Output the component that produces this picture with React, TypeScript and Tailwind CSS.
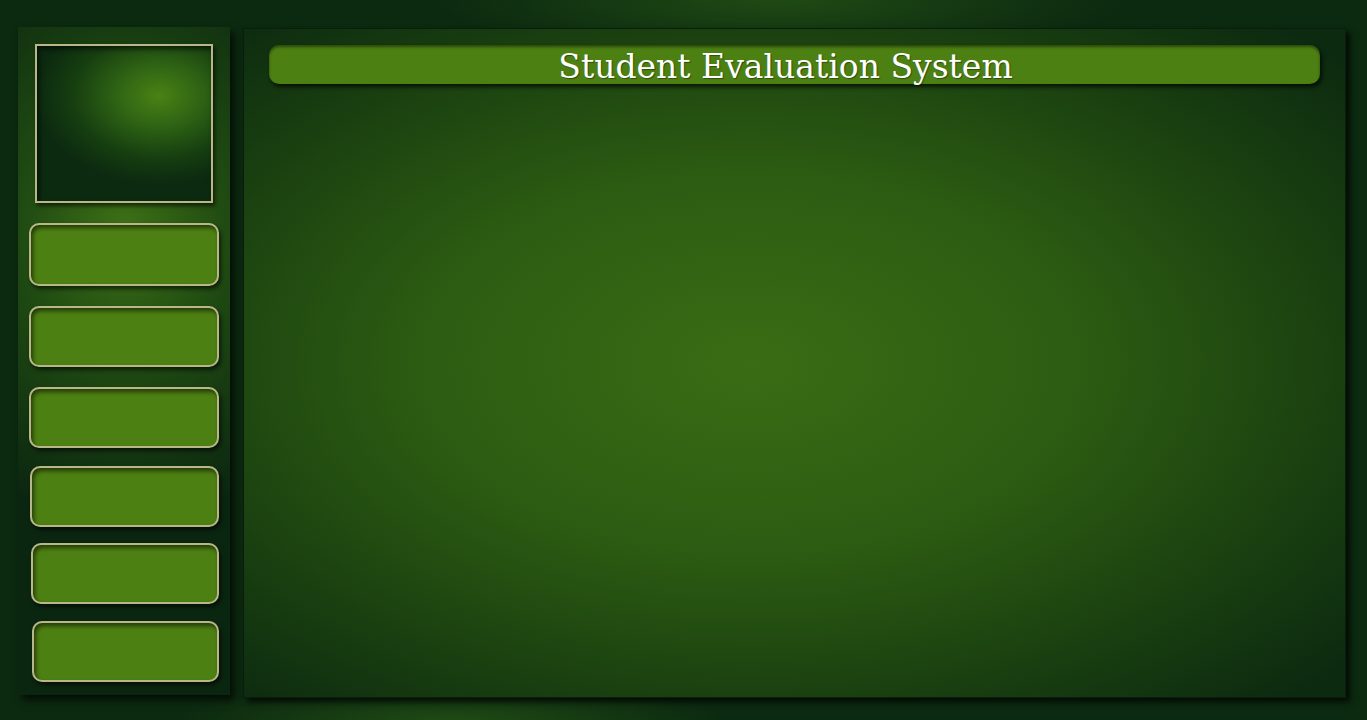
import React from 'react';

const NavButton = ({ className = '' }: { className?: string }) => {
  return (
    <div
      className={`h-[61px] rounded-[10px] border-2 border-[#b9b78a] bg-[#4d8012] shadow-[inset_2px_3px_4px_rgba(0,0,0,0.55),2px_3px_4px_rgba(0,0,0,0.6)] ${className}`}
    />
  );
};

const Sidebar = () => {
  return (
    <aside className="mb-[3px] flex w-[212px] shrink-0 flex-col bg-[radial-gradient(ellipse_110%_45%_at_50%_30%,#3d7016_0%,#1f4a12_45%,#0b2610_100%)] px-[11px] pt-[17px] shadow-[4px_5px_8px_rgba(0,0,0,0.7)]">
      <div className="mx-[6px] h-[159px] border-2 border-[#b9b78a] bg-[radial-gradient(ellipse_80%_65%_at_70%_32%,#4a8214_0%,#2f6414_30%,#163e10_62%,#0c2a10_88%)] shadow-[inset_2px_3px_5px_rgba(0,0,0,0.6),2px_3px_4px_rgba(0,0,0,0.6)]" />
      <div className="mt-[20px] flex flex-col">
        <NavButton className="h-[63px]" />
        <NavButton className="mt-[20px]" />
        <NavButton className="mt-[20px] h-[60px]" />
        <NavButton className="mt-[18px] ml-[1px]" />
        <NavButton className="mt-[16px] ml-[2px] h-[60px]" />
        <NavButton className="mt-[17px] ml-[3px]" />
      </div>
    </aside>
  );
};

export default function App() {
  return (
    <div className="h-[720px] w-[1367px] overflow-hidden bg-[#0c2a10] bg-[radial-gradient(ellipse_25%_8%_at_57%_0%,#1f4a14_0%,transparent_100%),radial-gradient(ellipse_20%_5%_at_33%_100%,#1f4a14_0%,transparent_100%)] font-['DejaVu_Serif',serif]">
      <div className="flex h-full gap-[13px] pt-[27px] pb-[22px] pl-[18px] pr-[21px]">
        <Sidebar />
        <main className="mt-[1px] flex flex-1 flex-col border border-[#0a1e0c] bg-[radial-gradient(ellipse_72%_68%_at_46%_50%,#3a6c14_0%,#2c5c12_42%,#1a4010_74%,#0c2a10_100%)] px-[25px] pt-[16px] shadow-[4px_4px_6px_rgba(0,0,0,0.75)]">
          <div className="flex h-[39px] items-center justify-center rounded-[10px] bg-[#4d8012] pr-[18px] pt-[4px] shadow-[inset_0_2px_3px_rgba(0,0,0,0.45),2px_3px_4px_rgba(0,0,0,0.7)]">
            <h1 className="text-[33px] leading-none text-white [text-shadow:1px_1px_1px_rgba(0,0,0,0.4)]">
              Student Evaluation System
            </h1>
          </div>
        </main>
      </div>
    </div>
  );
}
